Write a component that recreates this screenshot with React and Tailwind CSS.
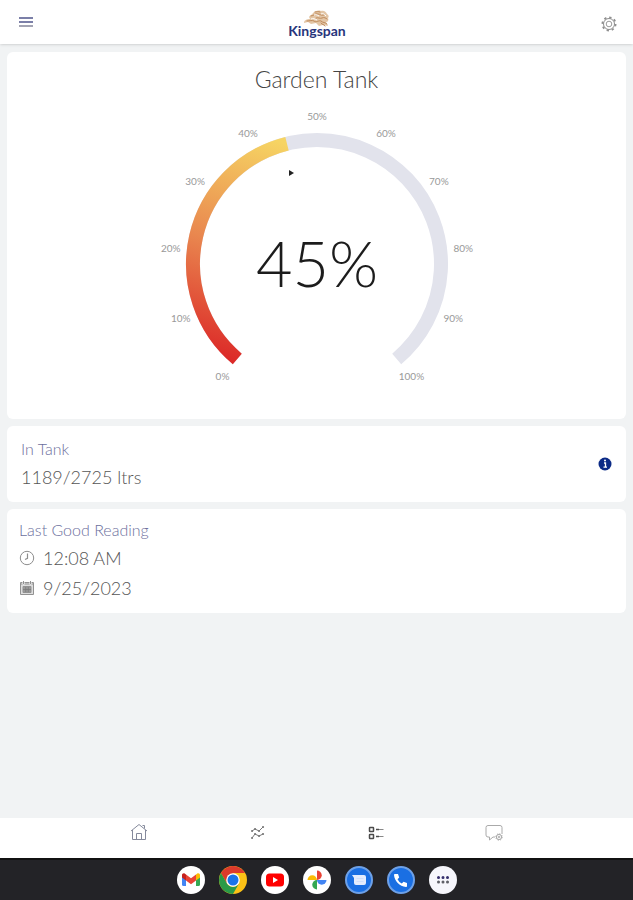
import React from 'react';

const level = 45;
const ticks = [0, 10, 20, 30, 40, 50, 60, 70, 80, 90, 100];

// The dial sweeps 280 degrees, starting at the lower left
const pointAt = (percent, radius) => {
  const angle = ((130 + percent * 2.8) * Math.PI) / 180;
  return { x: 160 + radius * Math.cos(angle), y: 160 + radius * Math.sin(angle) };
};

const arc = (from, to, radius) => {
  const a = pointAt(from, radius);
  const b = pointAt(to, radius);
  const large = (to - from) * 2.8 > 180 ? 1 : 0;
  return `M${a.x} ${a.y}A${radius} ${radius} 0 ${large} 1 ${b.x} ${b.y}`;
};

const Gauge = () => (
  <svg viewBox="0 0 320 290" className="w-80 mx-auto" role="img" aria-label="Tank level">
    <defs>
      <linearGradient id="level" x1="70" y1="255" x2="130" y2="40" gradientUnits="userSpaceOnUse">
        <stop offset="0" stopColor="#dc2a28" />
        <stop offset="0.5" stopColor="#e9874f" />
        <stop offset="1" stopColor="#f6d463" />
      </linearGradient>
    </defs>
    <path d={arc(0, 100, 124)} fill="none" stroke="#e2e3ec" strokeWidth="14" />
    <path d={arc(0, level, 124)} fill="none" stroke="url(#level)" strokeWidth="14" />
    <path d="M132 66l5 3-5 3z" fill="#222" />
    {ticks.map((tick) => {
      const { x, y } = pointAt(tick, 147);
      return (
        <text key={tick} x={x} y={y + 3} textAnchor="middle" fontSize="10" fontWeight="400" fill="#999">
          {tick}%
        </text>
      );
    })}
    <text x="160" y="183" textAnchor="middle" fontSize="63" fontWeight="300" fill="#1c1c1c">{level}%</text>
  </svg>
);

const Logo = () => (
  <svg viewBox="0 0 60 32" className="w-15 h-8" role="img" aria-label="Kingspan">
    <path d="M22 7c1-2 3-2 4-4 2-2 5-3 8-2 3-1 5 1 6 3 2 1 2 3 1 4 1 2 0 4-2 4l2 4-5-1-4 1-3-3-5 1-3-2-4 1c0-3 3-4 6-4z" fill="#e3c6a6" />
    <path
      d="M24 6c3 0 4-3 7-2 2 0 3 2 6 1M20 11c3 0 5-1 7 0 2 2 5-1 7 0 2 2 4 1 6 3M29 8c2-1 4 1 6 0s4 0 5 1M28 2c2 0 3-1 5 0M34 13c1 2 3 1 4 3"
      fill="none"
      stroke="#bd8757"
      strokeLinecap="round"
    />
    <path d="M27 5c2-1 3 0 5 1M24 9c2-1 4 0 6 1M34 4c2-1 3 0 5 2" fill="none" stroke="#fff" />
    <text x="30" y="26" textAnchor="middle" fontFamily="Lato, sans-serif" fontSize="14" fontWeight="700" fill="#27347c">Kingspan</text>
  </svg>
);

const GearIcon = () => (
  <svg viewBox="0 0 16 16" className="size-4" fill="none" stroke="#8e8e8e">
    <circle cx="8" cy="8" r="5.5" />
    <circle cx="8" cy="8" r="2.8" strokeWidth="0.9" />
    <circle cx="8" cy="8" r="6.6" strokeWidth="1.8" strokeDasharray="2.3 2.88" />
  </svg>
);

const ClockIcon = () => (
  <svg viewBox="0 0 16 16" className="size-4" fill="none" stroke="#8d8d8d">
    <circle cx="8" cy="8" r="6.7" />
    <path d="M8.5 3.5v4.8L6 9.5" strokeWidth="1.2" />
  </svg>
);

const CalendarIcon = () => (
  <svg viewBox="0 0 16 16" className="size-4" fill="none" stroke="#929292">
    <path d="M1.5 2.5h13v12h-13z" fill="#dedede" />
    <path d="M2 4h12" />
    <path d="M4.5 1v3.5M11.5 1v3.5" stroke="#fff" strokeWidth="2" />
    <path d="M4.5 1v3M11.5 1v3" />
    <path d="M4 6.5h8v6H4z" fill="#999" />
    <path d="M4 9.5h8M6.7 7v5M9.3 7v5" stroke="#777" strokeWidth="0.7" />
  </svg>
);

const HomeIcon = () => (
  <svg viewBox="0 0 18 18" className="size-4.5" fill="none" stroke="#858a9c">
    <path d="M1 8l8-6.5L17 8M2.5 7v9.5h13V7M6.5 16.5v-6h5v6M12.5 2.5h2v3" />
  </svg>
);

const TrendIcon = () => (
  <svg viewBox="0 0 16 16" className="size-4" fill="none" stroke="#777">
    <path d="M3 7l3-2 4 2 4-4M3 14l3-4 4 2 4-2" />
    <path d="M3 7h.1M6 5h.1M10 7h.1M14 3h.1M3 14h.1M6 10h.1M10 12h.1M14 10h.1" strokeWidth="2" strokeLinecap="round" />
  </svg>
);

const ListIcon = () => (
  <svg viewBox="0 0 16 16" className="size-4" fill="none" stroke="#4c4c4c">
    <rect x="1.5" y="3.5" width="4" height="4" rx="0.5" strokeWidth="1.5" />
    <rect x="1.5" y="10.5" width="4" height="4" rx="0.5" strokeWidth="1.5" />
    <path d="M8 5.5h3M8 12.5h3" strokeWidth="1.4" />
    <path d="M11 5.5h4.5M11 12.5h4.5" stroke="#888" />
  </svg>
);

const ChatIcon = () => (
  <svg viewBox="0 0 18 18" className="size-4.5" fill="none" stroke="#aaa">
    <path d="M10 14H8l-3.5 3v-3H3a2 2 0 0 1-2-2V4.5a2 2 0 0 1 2-2h12a2 2 0 0 1 2 2V11" />
    <circle cx="14" cy="14" r="2.6" />
    <circle cx="14" cy="14" r="3.2" strokeDasharray="1.3 1.2" />
    <circle cx="14" cy="14" r="0.8" />
  </svg>
);

const tabs = [
  { name: 'Home', icon: <HomeIcon /> },
  { name: 'Usage', icon: <TrendIcon /> },
  { name: 'Tanks', icon: <ListIcon /> },
  { name: 'Support', icon: <ChatIcon /> },
];

const apps = [
  {
    name: 'Gmail',
    icon: (
      <>
        <circle cx="14" cy="14" r="14" fill="#fff" />
        <path d="M5 9v9.5A1.5 1.5 0 0 0 6.5 20H9V9z" fill="#4285f4" />
        <path d="M23 9v9.5a1.5 1.5 0 0 1-1.5 1.5H19V9z" fill="#34a853" />
        <path d="M19 8.5l1-.7c1.3-1 3-.3 3 1.4v2.3l-4 3z" fill="#fbbc04" />
        <path d="M9 8.5l-1-.7c-1.3-1-3-.3-3 1.4v2.3l4 3z" fill="#c5221f" />
        <path d="M9 8.5l5 3.8 5-3.8v6l-5 3.7-5-3.7z" fill="#ea4335" />
      </>
    ),
  },
  {
    name: 'Chrome',
    icon: (
      <>
        <circle cx="14" cy="14" r="14" fill="#fbc116" />
        <path d="M14 7h12.1A14 14 0 0 0 1.9 7L8 17.5z" fill="#dc3a2c" />
        <path d="M20 17.5L14 28A14 14 0 0 1 1.9 7L8 17.5a7 7 0 0 0 12 0z" fill="#2a9a48" />
        <circle cx="14" cy="14" r="6.8" fill="#fff" />
        <circle cx="14" cy="14" r="5.5" fill="#1a73e8" />
      </>
    ),
  },
  {
    name: 'YouTube',
    icon: (
      <>
        <circle cx="14" cy="14" r="14" fill="#fff" />
        <rect x="5" y="7.5" width="18" height="13" rx="3.5" fill="#f00" />
        <path d="M12 11l5 3-5 3z" fill="#fff" />
      </>
    ),
  },
  {
    name: 'Photos',
    icon: (
      <>
        <circle cx="14" cy="14" r="14" fill="#fff" />
        <path d="M14 14V4.5a4.75 4.75 0 0 1 0 9.5z" fill="#ea4335" />
        <path d="M14 14h9.5a4.75 4.75 0 0 1-9.5 0z" fill="#4285f4" />
        <path d="M14 14v9.5a4.75 4.75 0 0 1 0-9.5z" fill="#34a853" />
        <path d="M14 14H4.5a4.75 4.75 0 0 1 9.5 0z" fill="#fbbc04" />
      </>
    ),
  },
  {
    name: 'Messages',
    icon: (
      <>
        <circle cx="14" cy="14" r="13" fill="#1a6fe3" stroke="#6ea1e8" strokeWidth="2" />
        <path d="M7 9h12a2 2 0 0 1 2 2v6a2 2 0 0 1-2 2h-8a2 2 0 0 1-2-2v-5z" fill="#e4ecfd" />
        <path d="M11.5 12.5h7M11.5 15.5h7" stroke="#d0dffc" />
      </>
    ),
  },
  {
    name: 'Phone',
    icon: (
      <>
        <circle cx="14" cy="14" r="13" fill="#1a6fe3" stroke="#6ea1e8" strokeWidth="2" />
        <path d="M8 8h3l1.2 3.5-1.7 1.7a9 9 0 0 0 4.3 4.3l1.7-1.7 3.5 1.2v3c0 .6-.5 1-1 1C12.5 20.5 7.5 15 7 9c0-.5.4-1 1-1z" fill="#fff" />
      </>
    ),
  },
  {
    name: 'All apps',
    icon: (
      <>
        <circle cx="14" cy="14" r="14" fill="#f6f6fc" />
        <path d="M9.5 11.5h.01M14 11.5h.01M18.5 11.5h.01" stroke="#36306e" strokeWidth="3" strokeLinecap="round" />
        <path d="M9.5 16h.01M14 16h.01M18.5 16h.01" stroke="#5f6068" strokeWidth="3" strokeLinecap="round" />
      </>
    ),
  },
];

const App = () => {
  return (
    <div className="min-h-screen flex flex-col bg-[#f1f3f4] font-['Lato',sans-serif] font-light text-[#555]">
      <header className="h-11 px-4 flex items-center justify-between bg-white shadow-sm">
        <button type="button" aria-label="Menu" className="w-5 flex justify-center">
          <svg viewBox="0 0 14 10" className="w-3.5" fill="none" strokeWidth="2">
            <path d="M0 1h14M0 5h14" stroke="#7b7fa8" />
            <path d="M0 9h14" stroke="#a3a4b3" />
          </svg>
        </button>
        <div className="pt-2"><Logo /></div>
        <button type="button" aria-label="Settings" className="w-5 pt-1 flex justify-end">
          <GearIcon />
        </button>
      </header>

      <main className="flex-1 px-[7px] py-2 flex flex-col gap-[7px]">
        <section className="bg-white rounded-md pt-3 pb-[25px]">
          <h1 className="text-center text-[23px] leading-[30px] text-[#444]">Garden Tank</h1>
          <div className="pt-2.5"><Gauge /></div>
        </section>

        <section className="bg-white rounded-md px-3.5 py-2.5 flex items-center justify-between">
          <div>
            <h2 className="text-base leading-[26px] text-[#6c6f9d]">In Tank</h2>
            <p className="text-lg leading-[30px]">1189/2725 ltrs</p>
          </div>
          <button type="button" aria-label="Tank information">
            <svg viewBox="0 0 14 14" className="size-3.5">
              <circle cx="7" cy="7" r="6.5" fill="#0b2a86" />
              <path d="M6 6h1.5v4M5.5 10.2H9" stroke="#fff" strokeWidth="1.3" fill="none" />
              <circle cx="7" cy="3.6" r="1" fill="#fff" />
            </svg>
          </button>
        </section>

        <section className="bg-white rounded-md px-3 pt-2 pb-2.5">
          <h2 className="text-base leading-[26px] text-[#6c6f9d]">Last Good Reading</h2>
          <p className="flex items-center gap-2 text-lg leading-[30px]"><ClockIcon /> 12:08 AM</p>
          <p className="flex items-center gap-2 text-lg leading-[30px]"><CalendarIcon /> 9/25/2023</p>
        </section>
      </main>

      <nav className="h-10 px-20 grid grid-cols-4 bg-white">
        {tabs.map((tab) => (
          <a key={tab.name} href="#" aria-label={tab.name} className="flex justify-center pt-1">
            <span className="h-5 flex items-center">{tab.icon}</span>
          </a>
        ))}
      </nav>

      <footer className="h-[42px] flex items-center justify-center gap-3.5 bg-[#232327] border-t-2 border-[#111]">
        {apps.map((app) => (
          <button key={app.name} type="button" aria-label={app.name}>
            <svg viewBox="0 0 28 28" className="size-7">{app.icon}</svg>
          </button>
        ))}
      </footer>
    </div>
  );
};

export default App;
